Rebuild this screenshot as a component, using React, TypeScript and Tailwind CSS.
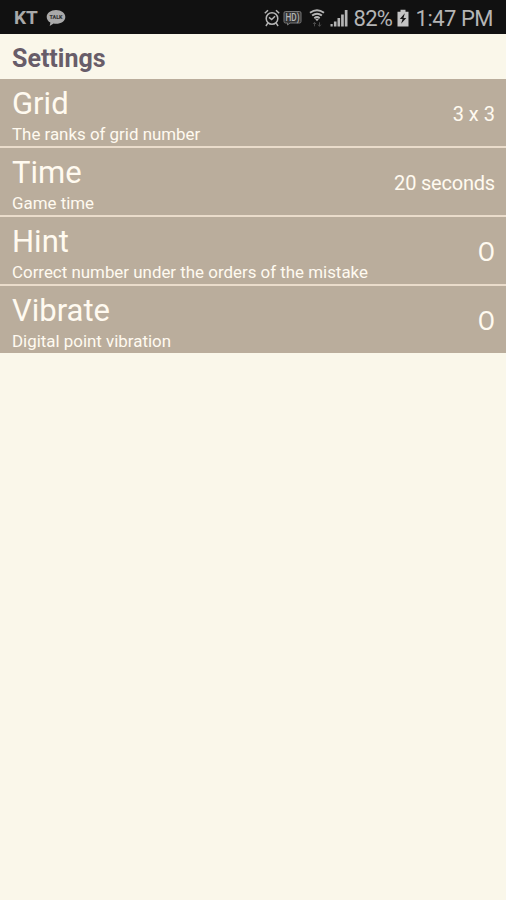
import type { ReactNode } from "react";

type Setting = {
  title: string;
  description: string;
  value: ReactNode;
};

const settings: Setting[] = [
  {
    title: "Grid",
    description: "The ranks of grid number",
    value: <span className="pt-[3px] text-[20px]">3 x 3</span>,
  },
  {
    title: "Time",
    description: "Game time",
    value: (
      <span className="pt-[3px] text-[20px] tracking-[-0.2px]">20 seconds</span>
    ),
  },
  {
    title: "Hint",
    description: "Correct number under the orders of the mistake",
    value: <span className="pt-[5px] text-[25px]">O</span>,
  },
  {
    title: "Vibrate",
    description: "Digital point vibration",
    value: <span className="pt-[5px] text-[25px]">O</span>,
  },
];

const TalkIcon = () => (
  <svg viewBox="0 0 20 18" className="ml-[8px] h-[18px] w-[20px]">
    <path
      d="M10 1C4.800 1 .7 4 .7 7.900c0 2.500 1.600 4.500 3.700 5.700l-.7 3.300 3.900-2.300c.8.2 1.600.2 2.400.2 5.200 0 9.300-3 9.300-6.900S15.200 1 10 1Z"
      fill="#a9a9a9"
    />
    <text
      x="10"
      y="10"
      textAnchor="middle"
      textLength="13"
      lengthAdjust="spacingAndGlyphs"
      fontSize="6"
      fontWeight="900"
      fill="#333"
    >
      TALK
    </text>
  </svg>
);

const AlarmIcon = () => (
  <svg
    viewBox="0 0 16 18"
    className="h-[18px] w-[16px]"
    fill="none"
    stroke="#b5b5b5"
    strokeWidth="1.5"
  >
    <circle cx="8" cy="9.500" r="5.800" />
    <path d="M.8 4.300 4 1.200M15.200 4.300 12 1.200M3.800 14.200 1.900 17M12.200 14.200l1.900 2.800M5 8.300l2.700 2.200L11 7.300" />
  </svg>
);

const HdIcon = () => (
  <svg viewBox="0 0 19 16" className="ml-[3px] h-[16px] w-[19px]">
    <path
      d="M2.500 1.500h14a1.500 1.500 0 0 1 1.500 1.500v8.500a1.500 1.500 0 0 1-1.500 1.500H7l-2.500 2v-2h-2A1.500 1.500 0 0 1 1 11.500V3a1.500 1.500 0 0 1 1.500-1.500Z"
      fill="#333"
      stroke="#777"
    />
    <text
      x="9.500"
      y="11"
      textAnchor="middle"
      textLength="14"
      lengthAdjust="spacingAndGlyphs"
      fontSize="10.500"
      fontWeight="500"
      fill="#b5b5b5"
    >
      HD)
    </text>
  </svg>
);

const WifiIcon = () => (
  <svg viewBox="0 0 16 18" className="ml-[7px] h-[18px] w-[16px]" fill="none">
    <path
      d="M1 3.800Q8-1.200 15 3.800M3.100 6.600Q8 2.900 12.900 6.600M5.300 9.200Q8 7 10.700 9.200"
      stroke="#b5b5b5"
      strokeWidth="1.900"
    />
    <path d="M6 9.800h4L8 12.200Z" fill="#b5b5b5" />
    <path
      d="M5.500 17.300V13.300M4 15l1.500-1.700L7 15M10.500 13.300v4M9 15.600l1.500 1.700 1.500-1.700"
      stroke="#4a4a4a"
    />
  </svg>
);

const SignalIcon = () => (
  <svg
    viewBox="0 0 18 18"
    className="ml-[5px] h-[18px] w-[18px]"
    fill="#b5b5b5"
  >
    <path d="M.5 15h2.200v2.500H.5zM3.900 12.500h2.600v5H3.900zM7.500 9h2.600v8.500H7.500zM11.100 5.500h2.700v12h-2.700zM14.800 1h2.700v16.500h-2.700z" />
  </svg>
);

const BatteryIcon = () => (
  <svg viewBox="0 0 12 18" className="ml-[4px] h-[18px] w-[12px]">
    <path d="M3.500.8h5v2h3v14.700H.5V2.800h3Z" fill="#c4c4c4" />
    <path d="M7.800 4.300 2.800 10h2.800l-1.500 4.800L9.300 9H6.500Z" fill="#161616" />
  </svg>
);

const StatusBar = () => {
  return (
    <div className="flex h-[34px] items-center bg-[#111111] pt-[2px] text-[22px] text-[#b5b5b5]">
      <span className="ml-[14px] text-[19px] font-bold text-[#a9a9a9]">KT</span>
      <TalkIcon />
      <div className="mr-[13px] ml-auto flex items-center">
        <AlarmIcon />
        <HdIcon />
        <WifiIcon />
        <SignalIcon />
        <span className="ml-[6px] w-[39px] tracking-[-0.7px]">82%</span>
        <BatteryIcon />
        <span className="ml-[7px] tracking-[-0.5px]">1:47 PM</span>
      </div>
    </div>
  );
};

const App = () => {
  return (
    <div className="min-h-screen bg-[#faf7ea] font-['Roboto',sans-serif]">
      <StatusBar />

      <h1 className="flex h-[45px] items-center pt-[4px] pl-[12px] text-[25px] font-bold text-[#685d69]">
        Settings
      </h1>

      <div className="flex flex-col gap-[2px] bg-[#eadccb]">
        {settings.map(({ title, description, value }) => (
          <div
            key={title}
            className="flex h-[67px] items-center justify-between bg-[#baad9c] pr-[11px] pl-[12px] text-[#fffaf0]"
          >
            <div className="pt-[4px]">
              <h2 className="text-[31px] leading-[40px]">{title}</h2>
              <p className="text-[16.9px] leading-[21px]">{description}</p>
            </div>
            {value}
          </div>
        ))}
      </div>
    </div>
  );
};

export default App;
